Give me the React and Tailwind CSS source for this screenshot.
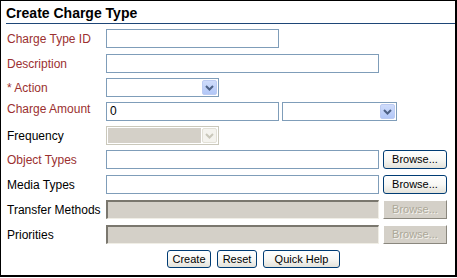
import React from 'react'

const red = 'text-[#9b3030]'

function Chevron({ color }) {
  return (
    <svg width="9" height="6" viewBox="0 0 9 6">
      <path d="M1 1 L4.5 4.5 L8 1" fill="none" stroke={color} strokeWidth="2" />
    </svg>
  )
}

function Select({ width, disabled }) {
  if (disabled) {
    return (
      <div className={`${width} h-[19px] border border-[#cac8bb] p-[1px] bg-white flex`}>
        <div className="flex-1 bg-[#d4d0c8]" />
        <div className="w-[15px] h-[15px] ml-[1px] rounded-[2px] bg-[#f4f3ee] border border-[#e2e0d6] flex items-center justify-center">
          <Chevron color="#c9c7ba" />
        </div>
      </div>
    )
  }
  return (
    <div className={`${width} h-[19px] border border-[#7f9db9] bg-white flex items-center justify-end pr-[1px]`}>
      <div className="w-[15px] h-[15px] rounded-[2px] bg-linear-to-b from-[#cfdcfb] to-[#b2c7f7] border border-[#bccbf2] flex items-center justify-center">
        <Chevron color="#4d6185" />
      </div>
    </div>
  )
}

function TextBox({ width, value, disabled }) {
  if (disabled) {
    return (
      <div className={`${width} h-[19px] bg-[#d4d0c8] border-t-2 border-l-2 border-[#7a776e] border-r border-b border-r-[#f0eee6] border-b-[#f0eee6]`} />
    )
  }
  return (
    <div className={`${width} h-[19px] border border-[#7f9db9] bg-white pl-[3px] text-[12px] leading-[17px] text-black`}>
      {value}
    </div>
  )
}

function Btn({ children, className, disabled }) {
  if (disabled) {
    return (
      <div className={`${className} flex items-center justify-center bg-[#d4d0c8] border border-t-white border-l-white border-r-[#8a877e] border-b-[#8a877e] text-[11px] text-[#aca899] [text-shadow:1px_1px_0_#f4f3ee]`}>
        {children}
      </div>
    )
  }
  return (
    <div className={`${className} flex items-center justify-center rounded-[3px] border border-[#003c74] bg-linear-to-b from-white via-[#f8f8f5] to-[#e3e2da] text-[11px] text-black`}>
      {children}
    </div>
  )
}

function Row({ label, isRed, mt, top, children }) {
  return (
    <div className={`flex h-[19px] ${mt} ${top ? 'items-start' : 'items-center'}`}>
      <div className={`w-[99px] shrink-0 text-[12px] leading-[14px] whitespace-nowrap ${isRed ? red : 'text-black'}`}>
        {label}
      </div>
      {children}
    </div>
  )
}

export default function App() {
  return (
    <div
      className="w-[457px] h-[277px] bg-white border-t border-l border-r-2 border-b-2 border-black"
      style={{ fontFamily: '"Liberation Sans", Arial, sans-serif' }}
    >
      {/* Header */}
      <div className="ml-[5px] h-[23px] border-b border-[#1e4677] pt-[4px] text-[14px] font-bold leading-[16px] text-black">
        Create Charge Type
      </div>

      {/* Form */}
      <div className="pl-[6px]">
        <Row label="Charge Type ID" isRed mt="mt-[5px]">
          <TextBox width="w-[173px]" />
        </Row>
        <Row label="Description" isRed mt="mt-[6px]">
          <TextBox width="w-[273px]" />
        </Row>
        <Row label="* Action" isRed mt="mt-[5px]">
          <Select width="w-[113px]" />
        </Row>
        <Row label="Charge Amount" isRed mt="mt-[5px]" top>
          <TextBox width="w-[173px]" value="0" />
          <div className="ml-[3px]">
            <Select width="w-[115px]" />
          </div>
        </Row>
        <Row label="Frequency" mt="mt-[5px]">
          <Select width="w-[113px]" disabled />
        </Row>
        <Row label="Object Types" isRed mt="mt-[5px]">
          <TextBox width="w-[273px]" />
          <Btn className="ml-[4px] w-[64px] h-[19px]">Browse...</Btn>
        </Row>
        <Row label="Media Types" mt="mt-[6px]">
          <TextBox width="w-[273px]" />
          <Btn className="ml-[4px] w-[64px] h-[19px]">Browse...</Btn>
        </Row>
        <Row label="Transfer Methods" mt="mt-[6px]">
          <TextBox width="w-[273px]" disabled />
          <Btn className="ml-[4px] w-[64px] h-[19px]" disabled>Browse...</Btn>
        </Row>
        <Row label="Priorities" mt="mt-[6px]">
          <TextBox width="w-[273px]" disabled />
          <Btn className="ml-[4px] w-[64px] h-[19px]" disabled>Browse...</Btn>
        </Row>

        {/* Actions */}
        <div className="flex gap-[6px] mt-[6px] pl-[160px]">
          <Btn className="w-[44px] h-[18px]">Create</Btn>
          <Btn className="w-[40px] h-[18px]">Reset</Btn>
          <Btn className="w-[77px] h-[18px]">Quick Help</Btn>
        </div>
      </div>
    </div>
  )
}
